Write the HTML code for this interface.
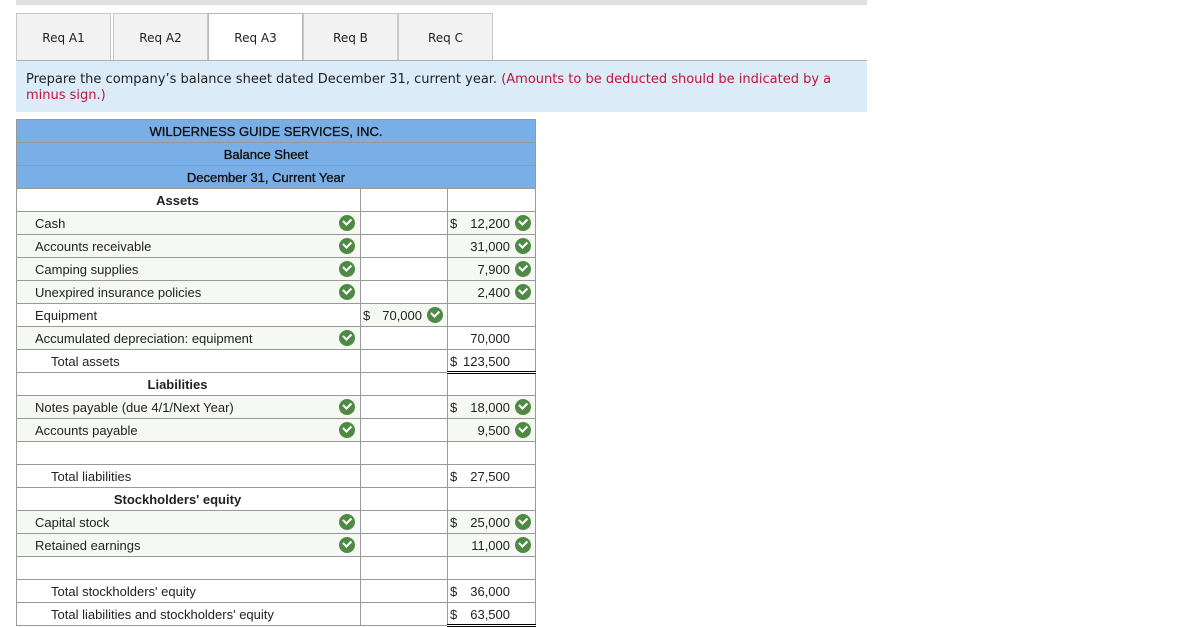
<!DOCTYPE html>
<html><head><style>
body{margin:0;background:#fff;width:1196px;height:627px;overflow:hidden;position:relative;font-family:"Liberation Sans",Arial,sans-serif}
.topbar{position:absolute;left:16px;top:0;width:851px;height:5px;background:#e0e0e0}
.tab{position:absolute;top:13px;height:46px;width:93px;background:#f2f2f2;border:1px solid #c8c8c8;border-bottom:none;font:12px "DejaVu Sans",sans-serif;color:#222;text-align:center;line-height:48px}
.tab.act{background:#fff;height:48px;border-color:#b8b8b8}
.line{position:absolute;left:16px;top:60px;width:851px;height:1px;background:#b0b0b0}
.instr{position:absolute;left:16px;top:61px;height:51px;background:#dcebf8;padding:11px 0 0 10px;box-sizing:border-box;font:13px "DejaVu Sans",sans-serif;color:#222;line-height:16px;width:851px}
.instr span{color:#c0143c}
table{position:absolute;left:16px;top:119px;border-collapse:collapse;font-size:13px;color:#222}
td{border:1px solid #999;height:23px;padding:0;box-sizing:border-box}
.h td{background:#7aaee6;text-align:center;color:#111;height:23px;padding-right:20px;-webkit-text-stroke:0.35px #111}
.c1{width:344px}.c2{width:87px}.c3{width:88px}
.f{background:#f6f8f4}
.lbl{padding-left:18px}
.ind{padding-left:34px}
.sec{text-align:center;font-weight:bold;padding-right:22px}
.ck{display:inline-block;width:16px;height:16px;border-radius:50%;background:#4e8a45;vertical-align:middle;position:relative}
.ck:after{content:"";position:absolute;left:4px;top:3px;width:6px;height:3.5px;border-left:2px solid #fff;border-bottom:2px solid #fff;transform:rotate(-45deg)}
.num{position:relative}
.num .d{position:absolute;left:2px;top:4px}
.num .v{position:absolute;right:25px;top:4px}
.num .ck{position:absolute;right:4px;top:3px}
.tt{border-top:1px solid #000}
.dbl{border-bottom:3px double #000}
td.lbl.num,td.ind{line-height:21px}
td.lbl.num .ck{position:absolute;right:5px;top:3px}
</style></head><body>
<div class="topbar"></div>
<div class="tab" style="left:16px">Req A1</div>
<div class="tab" style="left:113px">Req A2</div>
<div class="tab act" style="left:208px">Req A3</div>
<div class="tab" style="left:303px">Req B</div>
<div class="tab" style="left:398px">Req C</div>
<div class="line"></div>
<div class="instr">Prepare the company’s balance sheet dated December 31, current year. <span>(Amounts to be deducted should be indicated by a minus sign.)</span></div>
<table>
<tr class="h"><td colspan="3" style="width:519px">WILDERNESS GUIDE SERVICES, INC.</td></tr>
<tr class="h"><td colspan="3">Balance Sheet</td></tr>
<tr class="h"><td colspan="3">December 31, Current Year</td></tr>
<tr><td class="c1 sec">Assets</td><td class="c2"></td><td class="c3"></td></tr>
<tr><td class="f lbl num">Cash<span class="ck"></span></td><td></td><td class="f num"><span class="d">$</span><span class="v">12,200</span><span class="ck"></span></td></tr>
<tr><td class="f lbl num">Accounts receivable<span class="ck"></span></td><td></td><td class="f num"><span class="v">31,000</span><span class="ck"></span></td></tr>
<tr><td class="f lbl num">Camping supplies<span class="ck"></span></td><td></td><td class="f num"><span class="v">7,900</span><span class="ck"></span></td></tr>
<tr><td class="f lbl num">Unexpired insurance policies<span class="ck"></span></td><td></td><td class="f num"><span class="v">2,400</span><span class="ck"></span></td></tr>
<tr><td class="lbl">Equipment</td><td class="f num"><span class="d">$</span><span class="v">70,000</span><span class="ck"></span></td><td></td></tr>
<tr><td class="f lbl num">Accumulated depreciation: equipment<span class="ck"></span></td><td></td><td class="num"><span class="v">70,000</span></td></tr>
<tr><td class="ind">Total assets</td><td></td><td class="num tt dbl"><span class="d">$</span><span class="v">123,500</span></td></tr>
<tr><td class="sec">Liabilities</td><td></td><td></td></tr>
<tr><td class="f lbl num">Notes payable (due 4/1/Next Year)<span class="ck"></span></td><td></td><td class="f num"><span class="d">$</span><span class="v">18,000</span><span class="ck"></span></td></tr>
<tr><td class="f lbl num">Accounts payable<span class="ck"></span></td><td></td><td class="f num"><span class="v">9,500</span><span class="ck"></span></td></tr>
<tr><td></td><td></td><td></td></tr>
<tr><td class="ind">Total liabilities</td><td></td><td class="num tt"><span class="d">$</span><span class="v">27,500</span></td></tr>
<tr><td class="sec">Stockholders' equity</td><td></td><td></td></tr>
<tr><td class="f lbl num">Capital stock<span class="ck"></span></td><td></td><td class="f num"><span class="d">$</span><span class="v">25,000</span><span class="ck"></span></td></tr>
<tr><td class="f lbl num">Retained earnings<span class="ck"></span></td><td></td><td class="f num"><span class="v">11,000</span><span class="ck"></span></td></tr>
<tr><td></td><td></td><td></td></tr>
<tr><td class="ind">Total stockholders' equity</td><td></td><td class="num tt"><span class="d">$</span><span class="v">36,000</span></td></tr>
<tr><td class="ind">Total liabilities and stockholders' equity</td><td></td><td class="num dbl"><span class="d">$</span><span class="v">63,500</span></td></tr>
</table>
</body></html>
